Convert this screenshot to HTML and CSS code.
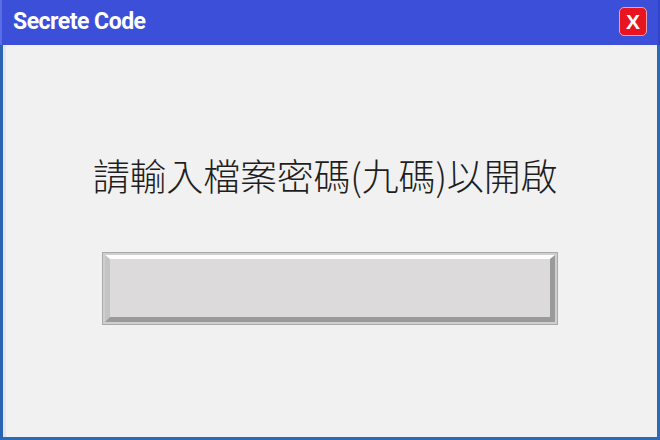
FILE: index.html
```html
<!DOCTYPE html>
<html lang="zh-Hant">
<head>
<meta charset="utf-8">
<title>Secrete Code</title>
<link rel="stylesheet" href="styles.css">
</head>
<body>
<div class="window">
  <div class="titlebar">
    <span class="title">Secrete Code</span>
    <button class="close" type="button">X</button>
  </div>
  <div class="content">
    <p class="prompt">請輸入檔案密碼(九碼)以開啟</p>
    <div class="field">
      <div class="field-inner"></div>
    </div>
  </div>
</div>
</body>
</html>
```
FILE: styles.css
```css
html, body {
  margin: 0;
  padding: 0;
  width: 660px;
  height: 440px;
  overflow: hidden;
  background: #f1f1f1;
}
.window {
  width: 660px;
  height: 440px;
  display: flex;
  flex-direction: column;
  box-sizing: border-box;
}
.titlebar {
  height: 45px;
  flex: none;
  display: flex;
  align-items: center;
  justify-content: space-between;
  padding: 0 11px 0 13px;
  background: #3c4fd8;
  border-left: 2px solid #5b6de3;
  border-right: 2px solid #3145c8;
  box-sizing: border-box;
}
.title {
  color: #fff;
  font-family: "Roboto", "Liberation Sans", sans-serif;
  font-weight: 700;
  font-size: 23px;
  letter-spacing: -0.5px;
  margin-top: -3px;
  margin-left: -2px;
}
.close {
  width: 28px;
  height: 29px;
  margin-top: -2px;
  padding: 0;
  border: 1.5px solid #f3a0a8;
  border-radius: 5px;
  background: #e8141f;
  color: #fff;
  font-family: "Liberation Sans", sans-serif;
  font-weight: 700;
  font-size: 21px;
  line-height: 26px;
  text-align: center;
}
.content {
  flex: 1;
  display: flex;
  flex-direction: column;
  align-items: center;
  background: #f1f1f1;
  border-left: 3px solid #2a64b0;
  border-right: 3px solid #2a6ab8;
  border-bottom: 3px solid #2a6ab8;
  box-shadow: inset 3px 0 0 #dfe6ee;
}
.prompt {
  margin: 103px 10px 0 0;
  font-family: "Noto Sans CJK TC", "Noto Sans CJK SC", sans-serif;
  font-size: 37px;
  line-height: 54px;
  color: #1e1e1e;
  font-weight: 300;
  letter-spacing: -0.2px;
}
.field {
  margin-top: 50px;
  margin-left: -1px;
  width: 456px;
  height: 73px;
  box-sizing: border-box;
  border: 1px solid #a9a9a9;
  padding: 2px;
  background: #cfcfcf;
}
.field-inner {
  width: 100%;
  height: 100%;
  box-sizing: border-box;
  border-style: solid;
  border-width: 4px 5px 5px 5px;
  border-color: #fdfdfd #9a9a9a #9a9a9a #c4c4c4;
  background: #dcdadb;
}
```
